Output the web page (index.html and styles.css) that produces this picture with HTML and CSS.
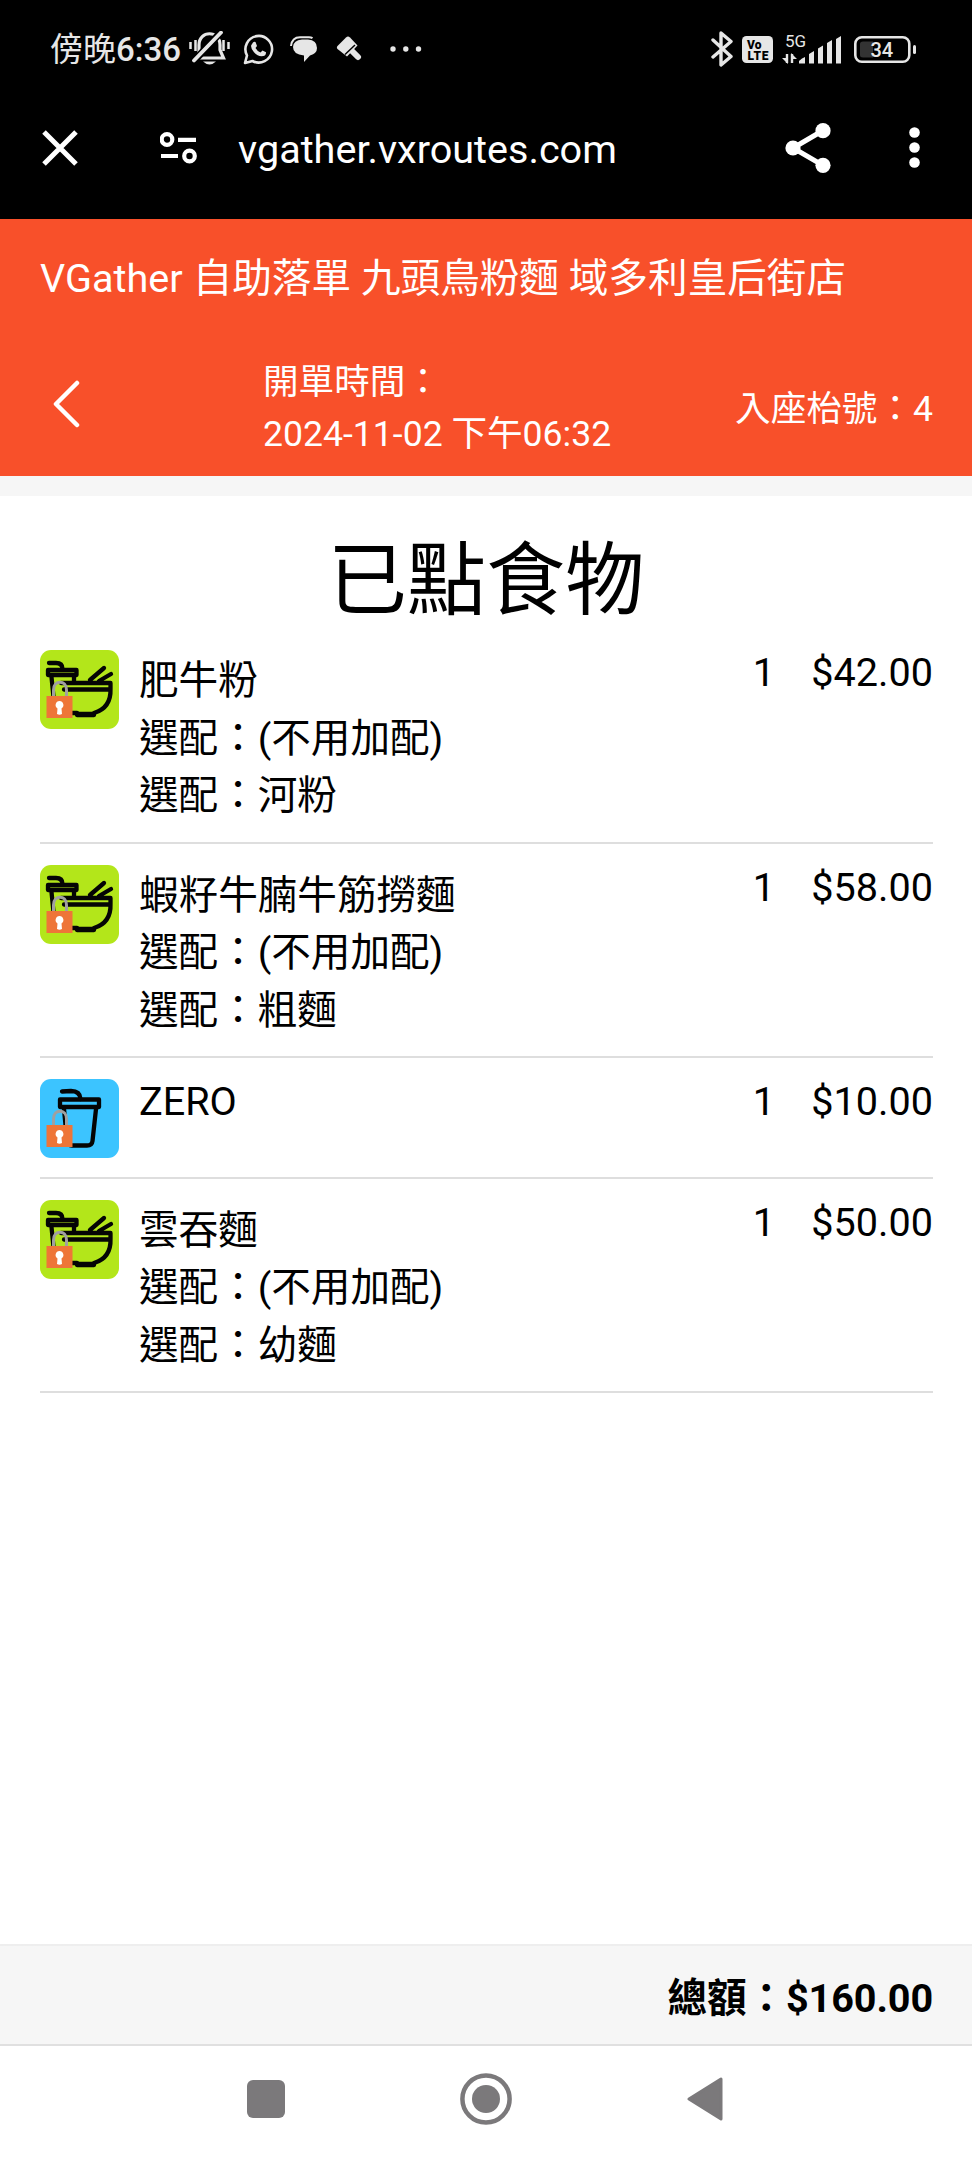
FILE: index.html
```html
<!DOCTYPE html>
<html lang="zh-Hant">
<head>
<meta charset="utf-8">
<title>VGather</title>
<link rel="stylesheet" href="styles.css">
</head>
<body>
<svg class="defs" width="0" height="0">
  <defs>
    <g id="lock">
      <path d="M13.500 47V40C13.500 29.500 26.500 29.500 26.500 40V47" fill="none" stroke="#a0a0a0" stroke-width="3"/>
      <rect x="6.500" y="46" width="26" height="22" fill="#ee7538"/>
      <path d="M19.500 51a4 4 0 0 1 2 7.400L22 64q-2.500 1.600-5 0l.5-5.600a4 4 0 0 1 2-7.400z" fill="#fff"/>
    </g>
    <g id="noodle">
      <rect width="79" height="79" rx="11" fill="#b3e61a"/>
      <g fill="none" stroke="#050505" stroke-width="4.300" stroke-linecap="round" stroke-linejoin="round">
        <path d="M9 13h7q6.500 0 6.500 6"/>
        <rect x="8" y="20" width="28.500" height="5"/>
        <path d="M11.500 27l2 20M34 27v5M21 33h49.500v6.500H24M70.500 39C71 53 64 60 54 63v2H37v-2h-5M50 30L64 18M59 31L71 24"/>
        <path d="M37 64h17"/>
      </g>
      <use href="#lock"/>
    </g>
    <g id="drink">
      <rect width="79" height="79" rx="11" fill="#3cc4ff"/>
      <g fill="none" stroke="#050505" stroke-width="4.300" stroke-linecap="round" stroke-linejoin="round">
        <path d="M22 12.500l9-.500q9 0 9.500 8"/>
        <rect x="20" y="20.500" width="39" height="7.500"/>
        <path d="M24 30l3 32q.5 4.500 5 4.500h15q5 0 5.500-4.500L56 30"/>
      </g>
      <use href="#lock"/>
    </g>
  </defs>
</svg>

<div class="statusbar">
  <span class="clock">傍晚<b class="digits">6:36</b></span>
  <svg class="bell" width="41" height="36" viewBox="0 0 41 36" fill="none" stroke="#e6e6e6" stroke-width="3.200">
    <path d="M10 25V14C10 -1 31 -1 31 14V19L34.500 27H10"/>
    <path d="M32 1L5 30" stroke="#000" stroke-width="7"/>
    <path d="M32 1.500L5 29.500" stroke-linecap="round" stroke-width="3.800"/>
    <path d="M1.500 11v7M6.500 9v11M34.500 9v11M39.500 11v7" stroke-width="2.500"/>
    <path d="M14 30.500q6.500 6 13 0z" fill="#e6e6e6" stroke="none"/>
  </svg>
  <svg class="whatsapp" width="31" height="31" viewBox="0 0 31 31">
    <path d="M2 29l2-7.500A13.300 13.300 0 1 1 9.500 27z" fill="none" stroke="#e6e6e6" stroke-width="2.600" stroke-linejoin="round"/>
    <path d="M10 8.500q1-1 2.500-.5l1.500 4-1.500 2q1.500 3 5 4.500l2-2 3.500 1.700q.3 4-4.500 4-4-.2-7.500-4-3.500-3.700-2.800-7z" fill="#e6e6e6"/>
  </svg>
  <svg class="chat" width="28" height="26" viewBox="0 0 28 26">
    <path d="M1 10Q2 1.200 10 1.200h9q2 0 3.500 1" fill="none" stroke="#e6e6e6" stroke-width="2"/>
    <path d="M12 3.500h6Q27 4 27 12q0 5.500-7 7.500L14 26v-6.500Q3 18.500 3 11 3.500 4 12 3.500z" fill="#e6e6e6"/>
  </svg>
  <svg class="brush" width="26" height="26" viewBox="0 0 26 26">
    <path d="M2 9.500L10 1.500q2-2 4 0l7.500 8L11 20.500 1.500 13q-1.500-1.500.5-3.500z" fill="#e6e6e6"/>
    <path d="M16 15l6 6" stroke="#e6e6e6" stroke-width="6" stroke-linecap="round"/>
    <path d="M9 18.500l10-9.500" stroke="#000" stroke-width="1.500"/>
  </svg>
  <svg class="dots" width="32" height="6" viewBox="0 0 32 6" fill="#e6e6e6"><circle cx="3" cy="3" r="2.700"/><circle cx="15.800" cy="3" r="2.700"/><circle cx="28.500" cy="3" r="2.700"/></svg>
  <svg class="bluetooth" width="22" height="36" viewBox="0 0 22 36" fill="none" stroke="#e6e6e6" stroke-width="3.400" stroke-linejoin="round" stroke-linecap="round"><path d="M2 9L20 25.500 10 34V2L20 10.500 2 26"/></svg>
  <svg class="volte" width="31" height="27" viewBox="0 0 31 27"><rect width="31" height="27" rx="4.500" fill="#e6e6e6"/><text x="5" y="12.500" class="volte-text">Vo</text><text x="5.500" y="23.500" class="volte-text" textLength="21">LTE</text></svg>
  <svg class="signal" width="61" height="37" viewBox="0 -5 61 37" fill="#e6e6e6">
    <text x="3" y="10.500" class="net-text">5G</text>
    <path d="M5 18v9M10 27v-9" stroke="#e6e6e6" stroke-width="2.400"/><path d="M0 22h6v6zM9 17v6h6z"/>
    <path d="M17 25q3-3 6-4v6.500h-6zM27 18l5-3v12.500h-5zM36 12.500l5-3v18h-5zM45 7l5-3v23.500h-5zM54 3l5-3v27.500h-5z"/>
  </svg>
  <svg class="battery" width="63" height="27" viewBox="0 0 63 27">
    <rect x="1.300" y="1.300" width="54" height="24.400" rx="6.500" fill="none" stroke="#e6e6e6" stroke-width="2.600"/>
    <path d="M6 8q0-2.500 3-2.500h10v16H9q-3 0-3-2.500z" fill="#333"/>
    <rect x="59" y="9" width="3" height="9" rx="1.500" fill="#e6e6e6"/>
    <text x="16.500" y="20.800" class="battery-text">34</text>
  </svg>
</div>

<div class="urlbar">
  <svg class="close" width="36" height="36" viewBox="0 0 36 36" stroke="#fff" stroke-width="5"><path d="M2 2l32 32M34 2L2 34"/></svg>
  <svg class="tune" width="38" height="32" viewBox="0 0 38 32" fill="none" stroke="#fff" stroke-width="4.200"><circle cx="7" cy="7.500" r="5.300"/><circle cx="29.500" cy="24" r="5.300"/><path d="M18 7.800h18M1 24H18"/></svg>
  <span class="url">vgather.vxroutes.com</span>
  <svg class="share" width="46" height="50" viewBox="0 0 46 50" fill="#fff"><path d="M38 7.500L8 25l30 17.300" fill="none" stroke="#fff" stroke-width="5"/><circle cx="8" cy="25" r="7.600"/><circle cx="38" cy="7.700" r="7.600"/><circle cx="38" cy="42.300" r="7.600"/></svg>
  <svg class="more" width="11" height="41" viewBox="0 0 11 41" fill="#fff"><circle cx="5.500" cy="5.500" r="5.300"/><circle cx="5.500" cy="20.500" r="5.300"/><circle cx="5.500" cy="35.500" r="5.300"/></svg>
</div>

<header class="header">
  <div class="store">VGather 自助落單 九頭鳥粉麵 域多利皇后街店</div>
  <div class="bill">
    <svg class="back" width="28" height="50" viewBox="0 0 28 50" fill="none" stroke="#fff" stroke-width="4.500" stroke-linejoin="round" stroke-linecap="round"><path d="M25 4L4 25 25 46"/></svg>
    <div class="opened">開單時間：<br>2024-11-02 下午06:32</div>
    <div class="table">入座枱號：4</div>
  </div>
</header>

<main class="order">
  <h1 class="title">已點食物</h1>
  <ul class="items">
    <li class="item">
      <svg class="thumb" viewBox="0 0 79 79"><use href="#noodle"/></svg>
      <div class="name">肥牛粉<br>選配：(不用加配)<br>選配：河粉</div>
      <div class="qty">1</div><div class="price">$42.00</div>
    </li>
    <li class="item">
      <svg class="thumb" viewBox="0 0 79 79"><use href="#noodle"/></svg>
      <div class="name">蝦籽牛腩牛筋撈麵<br>選配：(不用加配)<br>選配：粗麵</div>
      <div class="qty">1</div><div class="price">$58.00</div>
    </li>
    <li class="item">
      <svg class="thumb" viewBox="0 0 79 79"><use href="#drink"/></svg>
      <div class="name latin">ZERO</div>
      <div class="qty">1</div><div class="price">$10.00</div>
    </li>
    <li class="item">
      <svg class="thumb" viewBox="0 0 79 79"><use href="#noodle"/></svg>
      <div class="name">雲吞麵<br>選配：(不用加配)<br>選配：幼麵</div>
      <div class="qty">1</div><div class="price">$50.00</div>
    </li>
  </ul>
</main>

<footer class="total">總額：$160.00</footer>

<nav class="navbar">
  <svg class="recent" width="38" height="38" viewBox="0 0 38 38"><rect width="38" height="38" rx="6" fill="#7b797b"/></svg>
  <svg class="home" width="52" height="52" viewBox="0 0 52 52"><circle cx="26" cy="26" r="23.600" fill="none" stroke="#7b797b" stroke-width="4.500"/><circle cx="26" cy="26" r="14" fill="#7b797b"/></svg>
  <svg class="return" width="36" height="44" viewBox="0 0 36 44"><path d="M34 2v40L2 22z" fill="#7b797b" stroke="#7b797b" stroke-width="3" stroke-linejoin="round"/></svg>
</nav>
</body>
</html>
```
FILE: styles.css
```css
* { box-sizing: border-box; }
html { height: 100%; }
body {
  margin: 0;
  height: 2160px;
  display: flex;
  flex-direction: column;
  background: #fff;
  color: #000;
  font-family: Roboto, "Noto Sans CJK TC", sans-serif;
  font-size: 39.6px;
}
svg { flex: none; display: block; }
.defs { position: absolute; }

.statusbar {
  height: 98px;
  padding-left: 50px;
  background: #000;
  color: #e6e6e6;
  display: flex;
  align-items: center;
}
.clock { width: 139px; padding-top: 2px; font-size: 33px; line-height: 48px; white-space: nowrap; }
.digits { font-weight: 500; }
.whatsapp { margin-left: 13px; }
.chat { margin-left: 16px; }
.brush { margin-left: 18px; }
.dots { margin-left: 28px; }
.bluetooth { margin-left: 289px; }
.volte { margin-left: 9px; }
.signal { margin-left: 9px; }
.battery { margin-left: 11px; }
.volte-text { font: 900 12px Roboto, sans-serif; fill: #000; }
.net-text { font: 400 17px/1 Roboto, sans-serif; }
.battery-text { font: 500 20px Roboto, sans-serif; fill: #e6e6e6; }

.urlbar {
  height: 121px;
  padding: 0 52px 22px 42px;
  background: #000;
  color: #fff;
  display: flex;
  align-items: center;
}
.tune { margin-left: 82px; }
.url { flex: 1; padding: 4px 0 0 40px; line-height: 48px; white-space: nowrap; }
.share { margin-right: 78px; }

.header { height: 257px; background: #f8502a; color: #fff; }
.store { height: 119px; padding: 0 40px; line-height: 119px; letter-spacing: 0.03px; white-space: nowrap; }
.bill { height: 138px; padding: 0 39px 0 52px; display: flex; font-size: 35.6px; line-height: 52px; }
.back { margin-top: 41px; }
.opened { margin: 18px 0 0 183px; flex: 1; }
.table { margin-top: 45px; }

.order { flex: 1; border-top: 20px solid #f6f6f6; }
.title { margin: 0; height: 133px; padding-top: 28px; font-size: 79.2px; font-weight: 400; line-height: 115px; text-align: center; }
.items { list-style: none; margin: 0; padding: 0 39px 0 40px; }
.item {
  display: flex;
  align-items: flex-start;
  min-height: 120.500px;
  padding: 21px 0 17px;
  border-bottom: 2px solid #dedede;
}
.thumb { width: 79px; height: 79px; }
.name { flex: 1; padding: 2px 0 0 20px; line-height: 57.5px; }
.latin, .qty, .price { padding-top: 0; line-height: 46px; }
.price { width: 158px; text-align: right; }

.total {
  height: 102px;
  padding: 0 39px;
  background: #f6f6f6;
  border-top: 2px solid #eee;
  border-bottom: 2px solid #e0e0e0;
  line-height: 105px;
  font-weight: 700;
  letter-spacing: -0.1px;
  text-align: right;
}
.navbar { height: 114px; padding: 0 0 8px 247px; display: flex; align-items: center; }
.home { margin-left: 175px; }
.return { margin-left: 175px; }
```
